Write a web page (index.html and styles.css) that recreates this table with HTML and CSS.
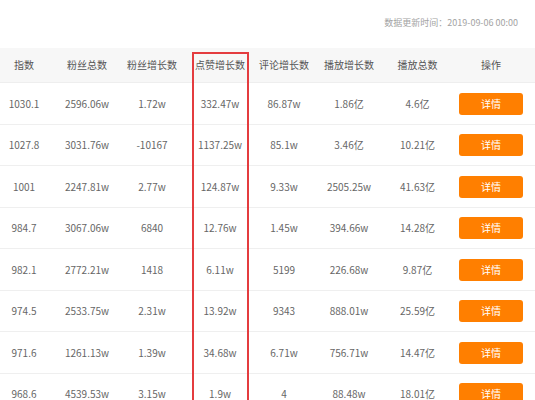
FILE: index.html
```html
<!DOCTYPE html>
<html lang="zh-CN">
<head>
<meta charset="utf-8">
<link rel="stylesheet" href="styles.css">
</head>
<body>
<div class="page">
  <div class="update">数据更新时间：2019-09-06 00:00</div>
  <div class="table">
    <div class="row head">
      <div class="c c1">指数</div>
      <div class="c c2">粉丝总数</div>
      <div class="c c3">粉丝增长数</div>
      <div class="c c4">点赞增长数</div>
      <div class="c c5">评论增长数</div>
      <div class="c c6">播放增长数</div>
      <div class="c c7">播放总数</div>
      <div class="c c8">操作</div>
    </div>
    <div class="row">
      <div class="c c1">1030.1</div><div class="c c2">2596.06w</div><div class="c c3">1.72w</div><div class="c c4">332.47w</div><div class="c c5">86.87w</div><div class="c c6">1.86亿</div><div class="c c7">4.6亿</div><div class="c c8"><button class="btn">详情</button></div>
    </div>
    <div class="row">
      <div class="c c1">1027.8</div><div class="c c2">3031.76w</div><div class="c c3">-10167</div><div class="c c4">1137.25w</div><div class="c c5">85.1w</div><div class="c c6">3.46亿</div><div class="c c7">10.21亿</div><div class="c c8"><button class="btn">详情</button></div>
    </div>
    <div class="row">
      <div class="c c1">1001</div><div class="c c2">2247.81w</div><div class="c c3">2.77w</div><div class="c c4">124.87w</div><div class="c c5">9.33w</div><div class="c c6">2505.25w</div><div class="c c7">41.63亿</div><div class="c c8"><button class="btn">详情</button></div>
    </div>
    <div class="row">
      <div class="c c1">984.7</div><div class="c c2">3067.06w</div><div class="c c3">6840</div><div class="c c4">12.76w</div><div class="c c5">1.45w</div><div class="c c6">394.66w</div><div class="c c7">14.28亿</div><div class="c c8"><button class="btn">详情</button></div>
    </div>
    <div class="row">
      <div class="c c1">982.1</div><div class="c c2">2772.21w</div><div class="c c3">1418</div><div class="c c4">6.11w</div><div class="c c5">5199</div><div class="c c6">226.68w</div><div class="c c7">9.87亿</div><div class="c c8"><button class="btn">详情</button></div>
    </div>
    <div class="row">
      <div class="c c1">974.5</div><div class="c c2">2533.75w</div><div class="c c3">2.31w</div><div class="c c4">13.92w</div><div class="c c5">9343</div><div class="c c6">888.01w</div><div class="c c7">25.59亿</div><div class="c c8"><button class="btn">详情</button></div>
    </div>
    <div class="row">
      <div class="c c1">971.6</div><div class="c c2">1261.13w</div><div class="c c3">1.39w</div><div class="c c4">34.68w</div><div class="c c5">6.71w</div><div class="c c6">756.71w</div><div class="c c7">14.47亿</div><div class="c c8"><button class="btn">详情</button></div>
    </div>
    <div class="row">
      <div class="c c1">968.6</div><div class="c c2">4539.53w</div><div class="c c3">3.15w</div><div class="c c4">1.9w</div><div class="c c5">4</div><div class="c c6">88.48w</div><div class="c c7">18.01亿</div><div class="c c8"><button class="btn">详情</button></div>
    </div>
    <div class="highlight"></div>
  </div>
</div>
</body>
</html>
```
FILE: styles.css
```css
* { box-sizing: border-box; }
html, body { margin: 0; padding: 0; background: #fff; }
body {
  font-family: "Noto Sans CJK SC", sans-serif;
  color: #666666;
  overflow: hidden;
}
.page { width: 535px; height: 400px; overflow: hidden; }
.update {
  height: 48px;
  padding: 15px 17px 0 0;
  text-align: right;
  font-size: 9px;
  color: #a3a3a3;
  line-height: 16px;
}
.table { position: relative; }
.row {
  display: grid;
  grid-template-columns: 55px 64px 66px 67px 64px 66px 71px 82px;
  height: 41.5px;
  border-bottom: 1px solid #efefef;
  align-items: center;
  font-size: 10px;
  line-height: 14px;
  padding-top: 1px;
}
.row.head {
  height: 35px;
  padding-top: 0;
  background: #f7f7f7;
  font-size: 10px;
  color: #555555;
  border-bottom: 1px solid #eeeeee;
}
.c { text-align: center; white-space: nowrap; }
.c1 { padding-right: 7px; }
.c4 { padding-left: 3px; }
.c8 { padding-right: 6px; display: flex; justify-content: center; }
.btn {
  width: 64px;
  height: 22px;
  border: 0;
  border-radius: 3px;
  background: #ff7f00;
  color: #fff;
  font-family: "Noto Sans CJK SC", sans-serif;
  font-size: 10px;
  line-height: 22px;
  padding: 0;
}
.highlight {
  position: absolute;
  left: 192px;
  top: 4px;
  width: 57px;
  height: 400px;
  border: 2px solid #e43c3f;
}
```
